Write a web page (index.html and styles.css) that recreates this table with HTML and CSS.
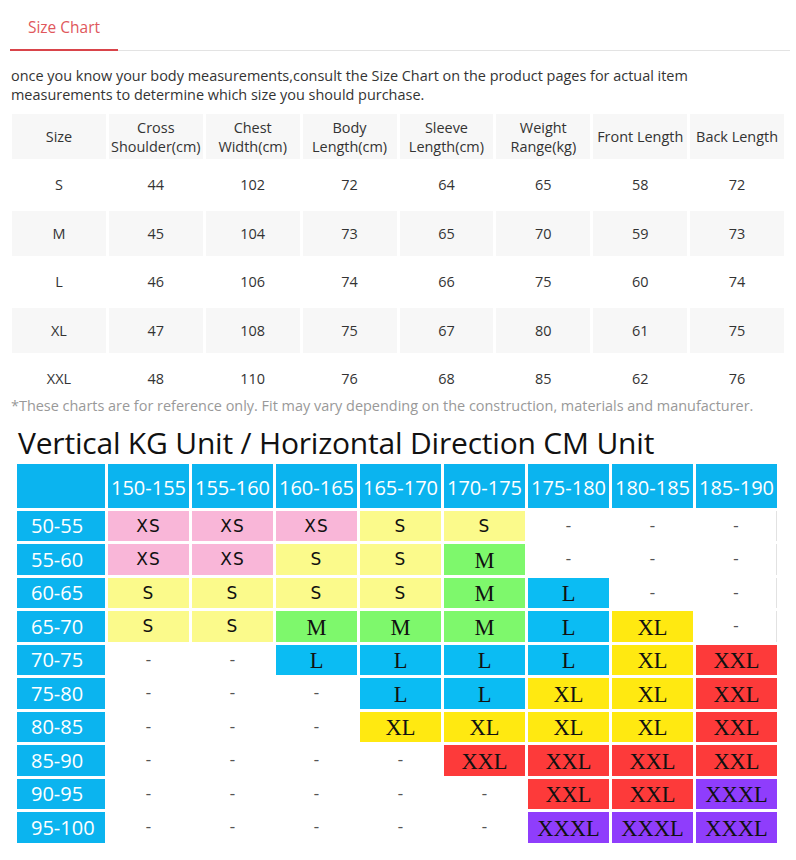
FILE: index.html
```html
<!DOCTYPE html>
<html>
<head>
<meta charset="utf-8">
<link rel="stylesheet" href="styles.css">
</head>
<body>
<div class="page">
  <div class="tabs"><div class="tab">Size Chart</div></div>
  <p class="desc">once you know your body measurements,consult the Size Chart on the product pages for actual item measurements to determine which size you should purchase.</p>
  <div class="size-table">
    <div class="c h">Size</div><div class="c h">Cross<br>Shoulder(cm)</div><div class="c h">Chest<br>Width(cm)</div><div class="c h">Body<br>Length(cm)</div><div class="c h">Sleeve<br>Length(cm)</div><div class="c h">Weight<br>Range(kg)</div><div class="c h">Front Length</div><div class="c h">Back Length</div>
    <div class="c">S</div><div class="c">44</div><div class="c">102</div><div class="c">72</div><div class="c">64</div><div class="c">65</div><div class="c">58</div><div class="c">72</div>
    <div class="c g">M</div><div class="c g">45</div><div class="c g">104</div><div class="c g">73</div><div class="c g">65</div><div class="c g">70</div><div class="c g">59</div><div class="c g">73</div>
    <div class="c">L</div><div class="c">46</div><div class="c">106</div><div class="c">74</div><div class="c">66</div><div class="c">75</div><div class="c">60</div><div class="c">74</div>
    <div class="c g">XL</div><div class="c g">47</div><div class="c g">108</div><div class="c g">75</div><div class="c g">67</div><div class="c g">80</div><div class="c g">61</div><div class="c g">75</div>
    <div class="c">XXL</div><div class="c">48</div><div class="c">110</div><div class="c">76</div><div class="c">68</div><div class="c">85</div><div class="c">62</div><div class="c">76</div>
  </div>
  <p class="note">*These charts are for reference only. Fit may vary depending on the construction, materials and manufacturer.</p>
  <h2 class="title">Vertical KG Unit / Horizontal Direction CM Unit</h2>
  <div class="grid">
    <div class="hd"></div><div class="hd">150-155</div><div class="hd">155-160</div><div class="hd">160-165</div><div class="hd">165-170</div><div class="hd">170-175</div><div class="hd">175-180</div><div class="hd">180-185</div><div class="hd">185-190</div>

    <div class="lb">50-55</div><div class="k xs">XS</div><div class="k xs">XS</div><div class="k xs">XS</div><div class="k s">S</div><div class="k s">S</div><div class="k d">-</div><div class="k d">-</div><div class="k d last">-</div>
    <div class="lb">55-60</div><div class="k xs">XS</div><div class="k xs">XS</div><div class="k s">S</div><div class="k s">S</div><div class="k m">M</div><div class="k d">-</div><div class="k d">-</div><div class="k d last">-</div>
    <div class="lb">60-65</div><div class="k s">S</div><div class="k s">S</div><div class="k s">S</div><div class="k s">S</div><div class="k m">M</div><div class="k l">L</div><div class="k d">-</div><div class="k d last">-</div>
    <div class="lb">65-70</div><div class="k s">S</div><div class="k s">S</div><div class="k m">M</div><div class="k m">M</div><div class="k m">M</div><div class="k l">L</div><div class="k xl">XL</div><div class="k d last">-</div>
    <div class="lb">70-75</div><div class="k d">-</div><div class="k d">-</div><div class="k l">L</div><div class="k l">L</div><div class="k l">L</div><div class="k l">L</div><div class="k xl">XL</div><div class="k xxl">XXL</div>
    <div class="lb">75-80</div><div class="k d">-</div><div class="k d">-</div><div class="k d">-</div><div class="k l">L</div><div class="k l">L</div><div class="k xl">XL</div><div class="k xl">XL</div><div class="k xxl">XXL</div>
    <div class="lb">80-85</div><div class="k d">-</div><div class="k d">-</div><div class="k d">-</div><div class="k xl">XL</div><div class="k xl">XL</div><div class="k xl">XL</div><div class="k xl">XL</div><div class="k xxl">XXL</div>
    <div class="lb">85-90</div><div class="k d">-</div><div class="k d">-</div><div class="k d">-</div><div class="k d">-</div><div class="k xxl">XXL</div><div class="k xxl">XXL</div><div class="k xxl">XXL</div><div class="k xxl">XXL</div>
    <div class="lb">90-95</div><div class="k d">-</div><div class="k d">-</div><div class="k d">-</div><div class="k d">-</div><div class="k d">-</div><div class="k xxl">XXL</div><div class="k xxl">XXL</div><div class="k xxxl">XXXL</div>
    <div class="lb">95-100</div><div class="k d">-</div><div class="k d">-</div><div class="k d">-</div><div class="k d">-</div><div class="k d">-</div><div class="k xxxl">XXXL</div><div class="k xxxl">XXXL</div><div class="k xxxl">XXXL</div>
  </div>
</div>
</body>
</html>
```

FILE: styles.css
```css
html, body {
  margin: 0;
  padding: 0;
  background: #fff;
}
.page {
  font-family: "Open Sans", "Noto Sans", sans-serif;
  color: #333;
  padding: 0 6px 0 10px;
  width: 780px;
}
.tabs {
  border-bottom: 1px solid #e3e3e3;
  display: flex;
}
.tab {
  width: 108px;
  text-align: center;
  font-size: 15.5px;
  line-height: 22px;
  padding: 16px 0 11px;
  color: #e0575c;
  border-bottom: 2px solid #d9444a;
  margin-bottom: -1px;
}
.desc {
  margin: 15px 0 0 1px;
  font-size: 14.45px;
  line-height: 19px;
  color: #333;
  width: 720px;
}
.size-table {
  margin: 10px 0 0 2px;
  width: 772px;
  display: grid;
  grid-template-columns: repeat(8, 1fr);
  grid-template-rows: 45px repeat(5, 45.5px);
  gap: 3px;
}
.c {
  display: flex;
  align-items: center;
  justify-content: center;
  text-align: center;
  font-size: 14.45px;
  line-height: 19px;
  color: #333;
}
.c.h, .c.g {
  background: #f7f7f7;
}
.note {
  margin: -6px 0 0 1px;
  font-size: 14.45px;
  line-height: 19px;
  color: #999;
}
.title {
  margin: 8px 0 0 8px;
  font-family: "Open Sans", "Noto Sans", sans-serif;
  font-weight: 400;
  font-size: 30px;
  line-height: 40px;
  color: #111;
  letter-spacing: -0.2px;
}
.grid {
  margin: 1px 0 0 7px;
  display: grid;
  grid-template-columns: 88px repeat(8, 81px);
  grid-template-rows: 44px repeat(10, 30.5px);
  gap: 3px;
}
.hd {
  background: #0bb4ef;
  color: #fff;
  font-size: 20px;
  display: flex;
  align-items: center;
  justify-content: center;
  padding-top: 4px;
}
.lb {
  background: #0bb4ef;
  color: #fff;
  font-size: 20px;
  display: flex;
  align-items: center;
  padding-left: 14px;
}
.k {
  display: flex;
  align-items: center;
  justify-content: center;
  color: #111;
  font-family: "Liberation Serif", "Times New Roman", serif;
  font-size: 22.5px;
  padding-top: 3px;
}
.k.xs, .k.s {
  font-family: "DejaVu Sans", sans-serif;
  font-size: 17px;
  letter-spacing: 1px;
  padding-top: 0;
}
.k.d {
  color: #555;
  font-size: 16px;
  padding-top: 0;
}
.k.last {
  border-right: 1px solid #e2e2e2;
}
.xs { background: #f9b6d8; }
.s { background: #fbfa8b; }
.m { background: #7ef86c; }
.l { background: #0bbcf3; }
.xl { background: #ffe911; }
.xxl { background: #fd3a3a; }
.xxxl { background: #8f3dfc; }
```
